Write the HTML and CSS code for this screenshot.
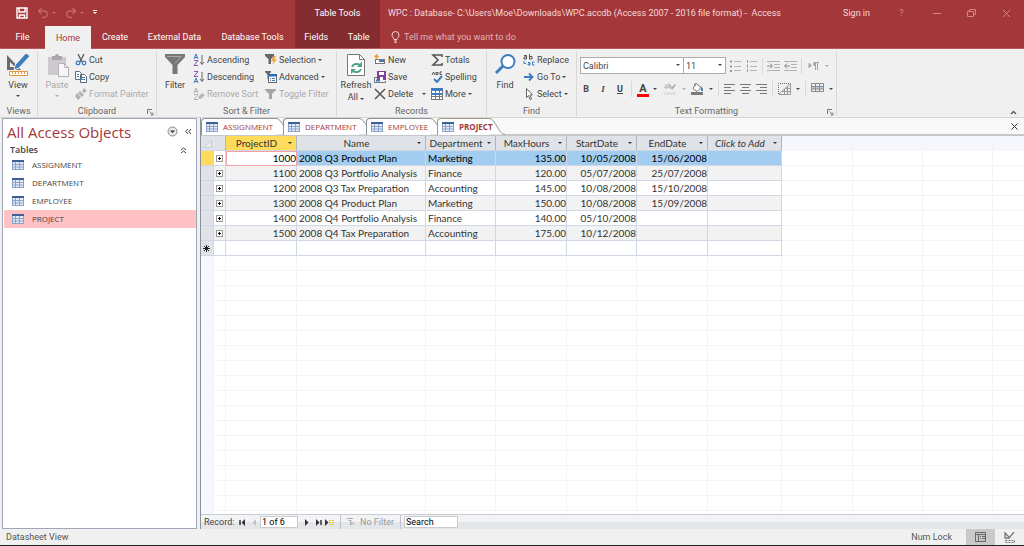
FILE: index.html
```
<!DOCTYPE html>
<html lang="en">

<head>
    <title>WPC : Database - Access</title>
    <meta charset="UTF-8" />
    <link rel="stylesheet" href="styles.css">
</head>

<body>
    <svg class="sprite" aria-hidden="true">
        <symbol id="i-table" viewBox="0 0 12 10">
            <rect x="0" y="0" width="12" height="10" fill="#e3ebf7" />
            <rect x="0" y="0" width="12" height="2" fill="#3f6096" />
            <path d="M0 4.500h12M0 7h12M0 9.500h12M3.500 2v8M7.500 2v8M11.500 2v8M.5 2v8" stroke="#8ba3cb" />
        </symbol>
        <symbol id="i-launch" viewBox="0 0 7 7">
            <path d="M.5 5V.5H5M2.500 2.500l3 3M6 3.500V6H3.500" fill="none" stroke="#777" />
        </symbol>
        <symbol id="i-plus" viewBox="0 0 7 7">
            <rect x=".5" y=".5" width="6" height="6" fill="#fff" stroke="#999" />
            <path d="M2 3.500h3M3.500 2v3" stroke="#000" />
        </symbol>
    </svg>

    <header class="titlebar">
        <div class="quick">
            <button aria-label="Save"><svg width="12" height="12" viewBox="0 0 12 12"><path d="M1 1h10v10H1zM3 1v4h6V1M3.500 11V8h5v3" fill="none" stroke="#fff" stroke-width="1.400" /></svg></button>
            <button aria-label="Undo"><svg width="12" height="12" viewBox="0 0 12 12"><path d="M4.500 1L1.500 4l3 3M2 4h5a3 3 0 0 1 0 6.500H5" fill="none" stroke="#c4686b" stroke-width="1.300" /></svg><i class="caret"></i></button>
            <button aria-label="Redo"><svg width="12" height="12" viewBox="0 0 12 12"><path d="M7.500 1l3 3-3 3M10 4H5a3 3 0 0 0 0 6.500h2" fill="none" stroke="#c4686b" stroke-width="1.300" /></svg><i class="caret"></i></button>
            <button class="customize" aria-label="Customize"><i class="caret"></i></button>
        </div>
        <div class="context">Table Tools</div>
        <h1>WPC : Database- C:\Users\Moe\Downloads\WPC.accdb (Access 2007 - 2016 file format) - &nbsp;Access</h1>
        <a class="signin" href="#">Sign in</a>
        <div class="window">
            <button aria-label="Help">?</button>
            <button aria-label="Minimize"><svg width="9" height="9"><path d="M1 4.500h8" stroke="#cf8789" /></svg></button>
            <button aria-label="Restore"><svg width="9" height="9"><path d="M.5 2.500h6v5h-6zM2.500 2.500v-2h6v5h-2" fill="none" stroke="#cf8789" /></svg></button>
            <button aria-label="Close"><svg width="9" height="9"><path d="M1 1l7 7M8 1l-7 7" stroke="#cf8789" /></svg></button>
        </div>
    </header>

    <nav class="tabs">
        <a class="file" href="#">File</a>
        <a class="home active" href="#">Home</a>
        <a class="create" href="#">Create</a>
        <a class="external" href="#">External Data</a>
        <a class="dbtools" href="#">Database Tools</a>
        <div class="context">
            <a href="#">Fields</a>
            <a href="#">Table</a>
        </div>
        <label class="tell">
            <svg width="9" height="12" viewBox="0 0 9 12"><path d="M3 8.500C3 7 1 6 1 4a3.500 3.500 0 0 1 7 0c0 2-2 3-2 4.500zM3 10h3M3.500 11.500h2" fill="none" stroke="#f3d5d6" /></svg>
            <input type="text" placeholder="Tell me what you want to do" />
        </label>
    </nav>

    <div class="ribbon">
        <section class="group views">
            <div class="tools">
                <button class="big"><svg width="24" height="24" viewBox="0 0 24 24"><path d="M1 2v15h14zM4 9l5 5H4z" fill="#6a6a6a" fill-rule="evenodd" /><path d="M20 0l4 3-11 12-5 2 1-5z" fill="#3f7cbf" stroke="#f0f0f0" /><path d="M3.500 18.500h18v4h-18zM6.500 19v2M9.500 19v2M12.500 19v2M15.500 19v2M18.500 19v2" fill="#fff" stroke="#e8953a" /></svg>View<i class="caret"></i></button>
            </div>
            <h2>Views</h2>
        </section>

        <section class="group clipboard">
            <div class="tools">
                <button class="big off"><svg width="24" height="24" viewBox="0 0 24 24"><path d="M3 4h18v18H3z" fill="#cdcacd" /><path d="M7 3h3a2 2 0 0 1 4 0h3v4H7z" fill="#a9a6a9" /><path d="M13.500 10.500h6l4 4v9h-10z" fill="#f8f4f8" stroke="#b5b0b5" /><path d="M19.500 10.500v4h4" fill="none" stroke="#b5b0b5" /></svg>Paste<i class="caret"></i></button>
                <div class="col">
                    <button><svg width="12" height="12" viewBox="0 0 12 12"><path d="M3 0l4 8M9 0L5 8" stroke="#666" stroke-width="1.500" /><circle cx="3" cy="9" r="1.800" fill="none" stroke="#3f7cbf" stroke-width="1.300" /><circle cx="9" cy="9" r="1.800" fill="none" stroke="#3f7cbf" stroke-width="1.300" /></svg>Cut</button>
                    <button><svg width="12" height="12" viewBox="0 0 12 12"><path d="M.5.5h4l2 2v6h-6zM5.500 3.500h4l2 2v6h-6z" fill="#fff" stroke="#5c6b7c" /><path d="M2 3.500h2M2 5.500h2M7 6.500h3M7 8.500h3" stroke="#3f7cbf" /></svg>Copy</button>
                    <button class="off"><svg width="12" height="12" viewBox="0 0 12 12"><path d="M9 0l3 3-3 2-2-2zM5 3l4 4-2 2-4-4zM2 5l4 4-3 3-3-4z" fill="#b1b1b1" /></svg>Format Painter</button>
                </div>
            </div>
            <h2>Clipboard</h2>
            <button class="launch" aria-label="Clipboard options"><svg width="7" height="7"><use href="#i-launch" /></svg></button>
        </section>

        <section class="group sort">
            <div class="tools">
                <button class="big"><svg width="24" height="24" viewBox="0 0 24 24"><path d="M2 1h20v3l-7.500 8v9h-5v-9L2 4z" fill="#777" /><path d="M4 3.500h14l-6 7" fill="none" stroke="#aaa" /></svg>Filter</button>
                <div class="col wide">
                    <button><svg width="12" height="12" viewBox="0 0 12 12"><path d="M1 5l2-5 2 5M1.500 3.500h3" fill="none" stroke="#3f7cbf" /><path d="M1 6.500h4L1 11.500h4" fill="none" stroke="#8a55b5" /><path d="M9 1v9M7 8l2 2.500L11 8" fill="none" stroke="#666" /></svg>Ascending</button>
                    <button><svg width="12" height="12" viewBox="0 0 12 12"><path d="M1 .5h4L1 5.500h4" fill="none" stroke="#8a55b5" /><path d="M1 12l2-5 2 5M1.500 10.500h3" fill="none" stroke="#3f7cbf" /><path d="M9 1v9M7 8l2 2.500L11 8" fill="none" stroke="#666" /></svg>Descending</button>
                    <button class="off"><svg width="12" height="12" viewBox="0 0 12 12"><path d="M1 5l2-5 2 5M1.500 3.500h3M1 6.500h4L1 11.500h4" fill="none" stroke="#b1b1b1" /><path d="M5 9l4-4 3 2-4 4H6z" fill="#b9b9b9" /></svg>Remove Sort</button>
                </div>
                <div class="col">
                    <button><svg width="12" height="12" viewBox="0 0 12 12"><path d="M0 0h9v2L6 5v5H3.500V5L0 2z" fill="#666" /><path d="M9 2L6 7h2.500L7 11l5-5.500H9.500L11 2z" fill="#f0a43a" /></svg>Selection<i class="caret"></i></button>
                    <button><svg width="12" height="12" viewBox="0 0 12 12"><path d="M0 0h6v1L4 3.500V8H2.500V3.500L0 1z" fill="#666" /><rect x="3.500" y="3.500" width="8" height="8" fill="#fff" stroke="#666" /><path d="M3 3h9v2.500H3z" fill="#2c6cb5" /><path d="M5 7.500h1M7 7.500h3M5 9.500h1M7 9.500h3" stroke="#3f7cbf" /></svg>Advanced<i class="caret"></i></button>
                    <button class="off"><svg width="12" height="12" viewBox="0 0 12 12"><path d="M0 1h11v1L7 6v5H4V6L0 2z" fill="#a5a5a5" /></svg>Toggle Filter</button>
                </div>
            </div>
            <h2>Sort &amp; Filter</h2>
        </section>

        <section class="group records">
            <div class="tools">
                <button class="big"><svg width="24" height="24" viewBox="0 0 24 24"><path d="M3.500 1.500h12l5 5v16h-17z" fill="#fff" stroke="#777" /><path d="M15.500 1.500v5h5" fill="none" stroke="#777" /><path d="M8 14a5 4.500 0 0 1 8-2M17 16a5 4.500 0 0 1-8 2" fill="none" stroke="#4fa383" stroke-width="2" /><path d="M18 8.500v5.500h-5zM7 21v-5h5z" fill="#4fa383" /></svg>Refresh<span>All <i class="caret"></i></span></button>
                <div class="col">
                    <button><svg width="12" height="12" viewBox="0 0 12 12"><path d="M2.500 0v5M0 2.500h5M1 1l3 3M4 1L1 4" stroke="#f0a43a" /><rect x="1.500" y="5.500" width="9" height="4" fill="#fff" stroke="#777" /><path d="M5 6h5v2H5z" fill="#3f7cbf" /></svg>New</button>
                    <button><svg width="12" height="12" viewBox="0 0 12 12"><path d="M3 0h9v9H3z" fill="#8040a0" /><path d="M5 1h5v3H5zM6 6h3v3H6z" fill="#fff" /><path d="M3 6.500H.5v5h11V10" fill="none" stroke="#777" /><path d="M2 8.500h4v2H2z" fill="#3f7cbf" /></svg>Save</button>
                    <button class="delete"><svg width="12" height="12" viewBox="0 0 12 12"><path d="M1 1l10 10M11 1L1 11" stroke="#555" stroke-width="1.500" /></svg><span>Delete</span><i class="caret"></i></button>
                </div>
                <div class="col">
                    <button><svg width="12" height="12" viewBox="0 0 12 12"><path d="M11 3V1H2l5 5-5 5h9V9" fill="none" stroke="#555" stroke-width="1.600" /></svg>Totals</button>
                    <button><svg width="12" height="12" viewBox="0 0 12 12"><path d="M1 4l1.500-3L4 4M5 1v2.500h2V1.500H5M11 1H9v2.500h2" fill="none" stroke="#555" /><path d="M3 8l3 3 5-6" fill="none" stroke="#3f7cbf" stroke-width="2" /></svg>Spelling</button>
                    <button><svg width="12" height="12" viewBox="0 0 12 12"><rect x=".5" y=".5" width="11" height="11" fill="#fff" stroke="#777" /><path d="M0 0h12v3H0zM1 5h10v2H1z" fill="#3f7cbf" /><path d="M0 8.500h12M4.500 3v9M8.500 3v9" stroke="#777" /></svg>More<i class="caret"></i></button>
                </div>
            </div>
            <h2>Records</h2>
        </section>

        <section class="group find">
            <div class="tools">
                <button class="big"><svg width="24" height="24" viewBox="0 0 24 24"><circle cx="15" cy="8.500" r="6.500" fill="#fff" stroke="#3f7cbf" stroke-width="2" /><path d="M10 13l-7 7" stroke="#3f7cbf" stroke-width="3" /></svg>Find</button>
                <div class="col">
                    <button><svg width="12" height="12" viewBox="0 0 12 12"><path d="M1 1.500h2.500V5H1V3h2M6.500 0v5H9V2.500H6.500" fill="none" stroke="#555" /><path d="M5 8.500h2V11H5V10h2M11.500 8H9.500v3h2" fill="none" stroke="#3f7cbf" /><path d="M1 7v2.500h2" fill="none" stroke="#3f7cbf" /></svg>Replace</button>
                    <button><svg width="12" height="12" viewBox="0 0 12 12"><path d="M1 6h8M6 2.500L9.500 6 6 9.500" fill="none" stroke="#3f7cbf" stroke-width="1.800" /></svg>Go To<i class="caret"></i></button>
                    <button><svg width="12" height="12" viewBox="0 0 12 12"><path d="M3.500.5v9l2-2 1.500 4 1.500-.5L7 7h2.500z" fill="#fff" stroke="#666" /></svg>Select<i class="caret"></i></button>
                </div>
            </div>
            <h2>Find</h2>
        </section>

        <section class="group text">
            <div class="tools format">
                <div class="row">
                    <div class="picks">
                        <div class="pick font"><select aria-label="Font"><option>Calibri</option></select><i class="caret"></i></div>
                        <div class="pick size"><select aria-label="Font size"><option>11</option></select><i class="caret"></i></div>
                    </div>
                    <button aria-label="Bullets"><svg width="12" height="12"><path d="M0 1.500h2M0 6.500h2M0 11h2" stroke="#999" stroke-width="2" /><path d="M4 1.500h7M4 6.500h7M4 10.500h7" stroke="#b5b5b5" /></svg></button>
                    <button aria-label="Numbering"><svg width="12" height="12"><path d="M1.500 0v3M1.500 4.500v3M1.500 9v3" stroke="#999" /><path d="M4 1.500h7M4 6.500h7M4 10.500h7" stroke="#b5b5b5" /></svg></button>
                    <b class="sep"></b>
                    <button aria-label="Indent"><svg width="13" height="12"><path d="M0 1.500h13M7 4.500h6M7 7.500h6M0 10.500h13" stroke="#b0b0b0" /><path d="M0 6h5M3 3.500L5.500 6 3 8.500" fill="none" stroke="#888" /></svg></button>
                    <button aria-label="Outdent"><svg width="13" height="12"><path d="M0 1.500h13M7 4.500h6M7 7.500h6M0 10.500h13" stroke="#b0b0b0" /><path d="M1 6h5M3 3.500L.5 6 3 8.500" fill="none" stroke="#888" /></svg></button>
                    <b class="sep"></b>
                    <button class="off direction" aria-label="Text direction"><svg width="12" height="12"><path d="M1 3v5M7.500 2v8M9.500 2v8M11 2.500H6" fill="none" stroke="#a5a5a5" /><path d="M7 2a2 2 0 0 0 0 4zM1 3l3 2.500L1 8z" fill="#a5a5a5" /></svg><i class="caret"></i></button>
                </div>
                <div class="row second">
                    <button class="letter bold">B</button>
                    <button class="letter italic">I</button>
                    <button class="letter under">U</button>
                    <b class="sep"></b>
                    <button class="letter color" aria-label="Font color">A<i class="caret"></i></button>
                    <button class="off" aria-label="Highlight"><svg width="13" height="12"><path d="M1 2h2v3H1V3.500M5 0v5h2V2.500H5" fill="none" stroke="#aaa" /><path d="M7 5l4-4 1 1-4 5z" fill="#aaa" /><path d="M0 9h12v3H0z" fill="#e6dde4" /></svg><i class="caret"></i></button>
                    <button aria-label="Fill"><svg width="13" height="12"><path d="M5 .5l5 4-4 4-4-3zM4 3V0" fill="#fff" stroke="#777" /><path d="M10 3l2 3v2h-2z" fill="#3f7cbf" /><path d="M0 9h12v3H0z" fill="#7a7a7a" /></svg><i class="caret"></i></button>
                    <b class="sep"></b>
                    <button aria-label="Align left"><svg width="11" height="10"><path d="M0 .5h11M0 3.500h7M0 6.500h11M0 9.500h7" stroke="#777" /></svg></button>
                    <button aria-label="Center"><svg width="11" height="10"><path d="M0 .5h11M2 3.500h7M0 6.500h11M2 9.500h7" stroke="#777" /></svg></button>
                    <button aria-label="Align right"><svg width="11" height="10"><path d="M0 .5h11M4 3.500h7M0 6.500h11M4 9.500h7" stroke="#777" /></svg></button>
                    <b class="sep"></b>
                    <button aria-label="Gridlines"><svg width="13" height="12"><path d="M.5 11V.5H11" fill="none" stroke="#666" stroke-dasharray="1 1" /><path d="M1 11.500h11.500V0M1 11L12 1M6.500 6v5M9.500 3v8M4 8.500h8M8 5.500h4" fill="none" stroke="#999" /></svg><i class="caret"></i></button>
                    <b class="sep"></b>
                    <button aria-label="Row colors"><svg width="13" height="12"><path d="M0 3h13v3H0z" fill="#b8d2ea" /><path d="M.5.500h12v8H.5zM0 3.500h13M0 6h13M4.500 0v8M8.500 0v8" fill="none" stroke="#8a8a8a" /></svg><i class="caret"></i></button>
                </div>
            </div>
            <h2>Text Formatting</h2>
            <button class="launch" aria-label="Text options"><svg width="7" height="7"><use href="#i-launch" /></svg></button>
        </section>
        <button class="collapse" aria-label="Collapse ribbon"><svg width="7" height="5"><path d="M1 4l2.500-2.500L6 4" fill="none" stroke="#555" stroke-width="1.300" /></svg></button>
    </div>

    <main>
        <aside>
            <div class="pane-head">
                <h2>All Access Objects</h2>
                <button aria-label="Filter objects"><svg width="11" height="11"><circle cx="5.500" cy="5.500" r="4.500" fill="#e6e8ec" stroke="#888" /><path d="M3 4.500h5L5.500 7z" fill="#333" /></svg></button>
                <button aria-label="Close pane"><svg width="7" height="7"><path d="M3 1L.8 3.500 3 6M6 1L3.800 3.500 6 6" fill="none" stroke="#444" /></svg></button>
            </div>
            <div class="pane-group">
                <h3>Tables</h3>
                <button aria-label="Collapse tables"><svg width="7" height="7"><path d="M1 3l2.500-2L6 3M1 6l2.500-2L6 6" fill="none" stroke="#444" /></svg></button>
            </div>
            <ul>
                <li><a href="#"><svg width="12" height="10"><use href="#i-table" /></svg>ASSIGNMENT</a></li>
                <li><a href="#"><svg width="12" height="10"><use href="#i-table" /></svg>DEPARTMENT</a></li>
                <li><a href="#"><svg width="12" height="10"><use href="#i-table" /></svg>EMPLOYEE</a></li>
                <li class="selected"><a href="#"><svg width="12" height="10"><use href="#i-table" /></svg>PROJECT</a></li>
            </ul>
        </aside>

        <div class="document">
            <div class="doc-tabs">
                <a class="assignment" href="#"><svg width="12" height="10"><use href="#i-table" /></svg>ASSIGNMENT<svg class="edge" width="16" height="17"><path d="M0 .5C7 .5 9 16.500 16 16.500H0z" /><path class="line" d="M0 .5C7 .5 9 16.500 16 16.500" /></svg></a>
                <a class="department" href="#"><svg width="12" height="10"><use href="#i-table" /></svg>DEPARTMENT<svg class="edge" width="16" height="17"><path d="M0 .5C7 .5 9 16.500 16 16.500H0z" /><path class="line" d="M0 .5C7 .5 9 16.500 16 16.500" /></svg></a>
                <a class="employee" href="#"><svg width="12" height="10"><use href="#i-table" /></svg>EMPLOYEE<svg class="edge" width="16" height="17"><path d="M0 .5C7 .5 9 16.500 16 16.500H0z" /><path class="line" d="M0 .5C7 .5 9 16.500 16 16.500" /></svg></a>
                <a class="project active" href="#"><svg width="12" height="10"><use href="#i-table" /></svg><span>PROJECT</span><svg class="edge" width="16" height="17"><path d="M0 .5C7 .5 9 16.500 16 16.500H0z" /><path class="line" d="M0 .5C7 .5 9 16.500 16 16.500" /></svg></a>
                <button aria-label="Close"><svg width="7" height="7"><path d="M.5.500l6 6M6.500.500l-6 6" stroke="#333" /></svg></button>
            </div>

            <div class="sheet">
                <div class="lines">
                    <i class="c-select"></i><i class="c-expand"></i><i class="c-id"></i><i class="c-name"></i><i class="c-dept"></i><i class="c-hours"></i><i class="c-date"></i><i class="c-end"></i><i class="c-add"></i><i class="c-hours"></i><i class="c-date"></i><i class="c-date"></i>
                </div>
                <table>
                    <colgroup>
                        <col class="c-select"><col class="c-expand"><col class="c-id"><col class="c-name"><col class="c-dept"><col class="c-hours"><col class="c-date"><col class="c-end"><col class="c-add">
                    </colgroup>
                    <thead>
                        <tr>
                            <th class="corner" colspan="2"><svg width="9" height="9"><path d="M8.500 1v7.500H1z" fill="#e9ecf1" stroke="#c5cad2" /></svg></th>
                            <th class="current"><div>ProjectID<i class="caret"></i></div></th>
                            <th><div>Name<i class="caret"></i></div></th>
                            <th><div>Department<i class="caret"></i></div></th>
                            <th><div>MaxHours<i class="caret"></i></div></th>
                            <th><div>StartDate<i class="caret"></i></div></th>
                            <th><div>EndDate<i class="caret"></i></div></th>
                            <th class="add"><div>Click to Add<i class="caret"></i></div></th>
                        </tr>
                    </thead>
                    <tbody>
                        <tr class="current">
                            <td></td><td><svg width="7" height="7"><use href="#i-plus" /></svg></td>
                            <td class="num">1000</td><td>2008 Q3 Product Plan</td><td>Marketing</td><td class="num">135.00</td><td class="num">10/05/2008</td><td class="num">15/06/2008</td><td></td>
                        </tr>
                        <tr>
                            <td></td><td><svg width="7" height="7"><use href="#i-plus" /></svg></td>
                            <td class="num">1100</td><td>2008 Q3 Portfolio Analysis</td><td>Finance</td><td class="num">120.00</td><td class="num">05/07/2008</td><td class="num">25/07/2008</td><td></td>
                        </tr>
                        <tr>
                            <td></td><td><svg width="7" height="7"><use href="#i-plus" /></svg></td>
                            <td class="num">1200</td><td>2008 Q3 Tax Preparation</td><td>Accounting</td><td class="num">145.00</td><td class="num">10/08/2008</td><td class="num">15/10/2008</td><td></td>
                        </tr>
                        <tr>
                            <td></td><td><svg width="7" height="7"><use href="#i-plus" /></svg></td>
                            <td class="num">1300</td><td>2008 Q4 Product Plan</td><td>Marketing</td><td class="num">150.00</td><td class="num">10/08/2008</td><td class="num">15/09/2008</td><td></td>
                        </tr>
                        <tr>
                            <td></td><td><svg width="7" height="7"><use href="#i-plus" /></svg></td>
                            <td class="num">1400</td><td>2008 Q4 Portfolio Analysis</td><td>Finance</td><td class="num">140.00</td><td class="num">05/10/2008</td><td></td><td></td>
                        </tr>
                        <tr>
                            <td></td><td><svg width="7" height="7"><use href="#i-plus" /></svg></td>
                            <td class="num">1500</td><td>2008 Q4 Tax Preparation</td><td>Accounting</td><td class="num">175.00</td><td class="num">10/12/2008</td><td></td><td></td>
                        </tr>
                        <tr class="new">
                            <td><svg width="7" height="7"><path d="M3.500 0v7M0 3.500h7M1 1l5 5M6 1L1 6" stroke="#222" /></svg></td><td></td><td></td><td></td><td></td><td></td><td></td><td></td><td></td>
                        </tr>
                    </tbody>
                </table>
            </div>

            <div class="recordbar">
                <label for="record">Record:</label>
                <button aria-label="First record"><svg width="7" height="7"><path d="M1 1v5" stroke="#333" stroke-width="1.500" /><path d="M6 0v7L2.500 3.500z" fill="#333" /></svg></button>
                <button aria-label="Previous record"><svg width="7" height="7"><path d="M5 0v7L1.500 3.500z" fill="#c2c2c2" /></svg></button>
                <input type="text" id="record" value="1 of 6" />
                <button class="next" aria-label="Next record"><svg width="7" height="7"><path d="M2 0v7l3.500-3.500z" fill="#333" /></svg></button>
                <button aria-label="Last record"><svg width="7" height="7"><path d="M6 1v5" stroke="#333" stroke-width="1.500" /><path d="M1 0v7l3.500-3.500z" fill="#333" /></svg></button>
                <button aria-label="New record"><svg width="10" height="7"><path d="M0 0v7l3.500-3.500z" fill="#333" /><path d="M4 1.500h6M4 3.500h6M4 5.500h6" stroke="#e9c33a" stroke-dasharray="2 1" /></svg></button>
                <button class="nofilter"><svg width="8" height="8"><path d="M0 .5h6M1.500 2.500h3M3.500 3v4M4 4l3 3M7 4L4 7" fill="none" stroke="#aaa" /></svg>No Filter</button>
                <input type="text" class="search" aria-label="Search" value="Search" />
            </div>
        </div>
    </main>

    <footer>
        <span>Datasheet View</span>
        <span class="numlock">Num Lock</span>
        <button class="on" aria-label="Datasheet View"><svg width="11" height="10"><path d="M.5.500h10v9H.5zM0 2.500h11M3.500 2v8M5 4.500h1M7 4.500h3M5 6.500h1M7 6.500h3" fill="none" stroke="#666" /></svg></button>
        <button aria-label="Design View"><svg width="12" height="11"><path d="M1 0v6h5M1 1l4 4M4 6l2-1 4-5" fill="none" stroke="#777" stroke-width="1.300" /><path d="M1.500 8.500h9v2h-9z" fill="none" stroke="#777" stroke-dasharray="2 1" /></svg></button>
    </footer>
</body>

</html>
```
FILE: styles.css
```
* {
    box-sizing: border-box;
}

body {
    margin: 0;
    min-height: 100vh;
    display: flex;
    flex-direction: column;
    font-family: Roboto, "Segoe UI", sans-serif;
    font-size: 9px;
    line-height: 12px;
    color: #444;
    background-color: #f0f0f0;
}

h1,
h2,
h3,
ul {
    margin: 0;
    padding: 0;
    font-weight: normal;
    font-size: 9px;
    list-style: none;
}

a {
    color: inherit;
    text-decoration: none;
}

button,
input,
select {
    margin: 0;
    padding: 0;
    border: none;
    outline: none;
    background: none;
    font: inherit;
    color: inherit;
}

button {
    display: flex;
    align-items: center;
    justify-content: center;
    white-space: nowrap;
}

svg {
    flex: none;
    display: block;
}

.sprite {
    position: absolute;
    width: 0;
    height: 0;
}

.caret {
    flex: none;
    display: inline-block;
    width: 4px;
    border: 2px solid transparent;
    border-top-color: currentColor;
    border-bottom: none;
}

/* title bar */
.titlebar {
    display: flex;
    height: 26px;
    align-items: center;
    background-color: #a4373a;
    color: #f5d9da;
}

.quick {
    display: flex;
    gap: 9px;
    width: 295px;
    padding-left: 16px;
}

.quick button {
    gap: 3px;
    color: #c4686b;
}

.quick .customize {
    color: #fff;
}

.customize .caret {
    position: relative;
}

.customize .caret::before {
    content: "";
    position: absolute;
    left: -2px;
    top: -4px;
    width: 4px;
    height: 1px;
    background-color: #fff;
}

.context {
    width: 85px;
    height: 100%;
    display: flex;
    align-items: center;
    justify-content: center;
    background-color: #842c2f;
    color: #fff;
}

.titlebar h1 {
    flex: 1;
    margin-left: 8px;
    white-space: nowrap;
}

.window {
    display: flex;
    margin-left: 14px;
}

.window button {
    width: 35px;
    color: #cf8789;
}

/* ribbon tabs */
.tabs {
    display: flex;
    height: 23px;
    background-color: #a4373a;
    color: #fff;
    border-bottom: 1px solid #b85a5d;
    white-space: nowrap;
}

.tabs a {
    display: flex;
    align-items: center;
    justify-content: center;
}

.tabs .file {
    width: 45px;
}

.tabs .home {
    width: 46px;
}

.tabs .create {
    width: 48px;
}

.tabs .external {
    width: 71px;
}

.tabs .dbtools {
    width: 85px;
}

.tabs .active {
    height: 23px;
    background-color: #f0f0f0;
    color: #a4373a;
}

.tabs .context a {
    flex: 1;
}

.tell {
    display: flex;
    align-items: center;
    gap: 4px;
    margin-left: 11px;
}

.tell input {
    width: 160px;
}

.tell input::placeholder {
    color: #e3b0b2;
    opacity: 1;
}

/* ribbon */
.ribbon {
    display: flex;
    height: 69px;
    border-bottom: 1px solid #d5d5d5;
    padding-top: 2px;
}

.group {
    position: relative;
    height: 65px;
    border-right: 1px solid #d8d8d8;
    display: flex;
    flex-direction: column;
}

.group h2 {
    text-align: center;
    color: #666;
    line-height: 10px;
}

.tools {
    display: flex;
    height: 56px;
}

.views {
    width: 38px;
}

.clipboard {
    width: 119px;
}

.sort {
    width: 180px;
}

.records {
    width: 150px;
}

.clipboard .tools,
.records .tools {
    padding-left: 1px;
}

.find {
    width: 90px;
}

.text {
    width: 260px;
}

.big {
    width: 36px;
    flex: none;
    flex-direction: column;
    justify-content: flex-start;
    padding-top: 2px;
}

.big svg {
    margin-bottom: 2px;
}

.big > .caret {
    margin-top: 4px;
}

.col {
    display: flex;
    flex-direction: column;
    margin-right: 5px;
}

.col.wide {
    width: 67px;
}

.col button {
    height: 17px;
    gap: 2px;
    justify-content: flex-start;
}

.delete span {
    width: 32px;
    text-align: left;
}

.off {
    color: #aaa;
}

.launch {
    position: absolute;
    right: 2px;
    bottom: 0;
}

.format {
    flex-direction: column;
    padding-left: 3px;
}

.row {
    display: flex;
    align-items: center;
    gap: 4px;
    height: 17px;
    margin-top: 6px;
}

.second {
    gap: 5px;
}

.row button {
    gap: 5px;
}

.row .direction {
    margin-left: 2px;
}

.sep {
    width: 1px;
    height: 16px;
    background-color: #d8d8d8;
}

.picks {
    display: flex;
}

.pick {
    position: relative;
    height: 17px;
    border: 1px solid #ababab;
    background-color: #fff;
}

.pick select {
    appearance: none;
    width: 100%;
    height: 15px;
    padding-left: 2px;
    display: block;
}

.pick .caret {
    position: absolute;
    right: 3px;
    top: 6px;
}

.font {
    width: 104px;
}

.size {
    width: 42px;
    border-left: none;
}

.letter {
    width: 12px;
    font-weight: bold;
}

.italic {
    font-family: "Liberation Serif", serif;
    font-style: italic;
}

.under {
    text-decoration: underline;
}

.row .color {
    width: 22px;
    position: relative;
    gap: 6px;
    font-size: 11px;
}

.color::before {
    content: "";
    position: absolute;
    left: 0;
    bottom: -2px;
    width: 12px;
    height: 3px;
    background-color: #f00;
}

.collapse {
    margin: auto 7px 2px auto;
}

/* workspace */
main {
    flex: 1;
    display: flex;
    gap: 3px;
    padding-left: 2px;
}

aside {
    width: 195px;
    flex: none;
    border: 1px solid #a0a8b8;
    background-color: #fff;
}

.pane-head,
.pane-group {
    display: flex;
    align-items: center;
    gap: 7px;
    padding: 0 4px;
}

.pane-head {
    height: 25px;
}

.pane-head h2 {
    flex: 1;
    font-family: "Open Sans", sans-serif;
    font-size: 15px;
    color: #a4373a;
}

.pane-group {
    height: 12px;
    padding: 0 9px 0 7px;
}

.pane-group h3 {
    flex: 1;
    font-family: "Open Sans", sans-serif;
    font-weight: 600;
}

aside li a {
    display: flex;
    align-items: center;
    gap: 8px;
    height: 18px;
    padding-left: 8px;
    margin-left: 1px;
    font-family: "Open Sans", sans-serif;
    font-size: 8px;
}

.selected a {
    background-color: #ffc1c3;
}

.document {
    flex: 1;
    display: flex;
    flex-direction: column;
    border-left: 1px solid #8a929c;
    background-color: #fff;
}

.doc-tabs {
    display: flex;
    height: 18px;
    border-bottom: 2px solid #c4c7ca;
    background-color: #f8f8f8;
    color: #a4373a;
    font-family: "Open Sans", sans-serif;
    font-size: 8px;
}

.doc-tabs a {
    position: relative;
    display: flex;
    align-items: center;
    gap: 5px;
    height: 17px;
    padding-left: 4px;
    border: 1px solid #8c9299;
    border-width: 1px 0 0 1px;
    border-radius: 4px 0 0 0;
    background-color: #fff;
}

.assignment {
    width: 75px;
}

.department,
.employee,
.project {
    margin-left: 7px;
}

.department {
    width: 76px;
}

.employee {
    width: 64px;
}

.project {
    width: 52px;
}

.doc-tabs .active {
    font-weight: bold;
    border-color: #a89a80;
}

.doc-tabs span {
    position: relative;
    z-index: 1;
}

.edge {
    position: absolute;
    left: 100%;
    top: -1px;
    fill: #fff;
}

.edge .line {
    fill: none;
    stroke: #8c9299;
}

.doc-tabs button {
    margin: 0 6px 0 auto;
}

/* datasheet */
.sheet {
    flex: 1;
    position: relative;
    font-family: Lato, Calibri, sans-serif;
    font-size: 10px;
    color: #333;
    background: linear-gradient(#f6f6fd, #f6f6fd) 0 0 / 100% 15px no-repeat, repeating-linear-gradient(#fff 0 14px, #f3f4f9 14px 15px);
}

.lines {
    position: absolute;
    inset: 0;
    display: flex;
    overflow: hidden;
}

.lines i {
    flex: none;
    border-right: 1px solid #f3f4f9;
}

.lines .c-select {
    background-color: #f6f6fd;
}

.c-select {
    width: 13px;
}

.c-expand {
    width: 12px;
}

.c-id {
    width: 71px;
}

.c-name {
    width: 129px;
}

.c-dept {
    width: 70px;
}

.c-hours {
    width: 71px;
}

.c-date {
    width: 70px;
}

.c-end {
    width: 71px;
}

.c-add {
    width: 74px;
}

table {
    position: relative;
    width: 581px;
    table-layout: fixed;
    border-collapse: separate;
    border-spacing: 0;
    line-height: 14px;
    background-color: #fff;
}

th,
td {
    height: 15px;
    padding: 0 2px;
    border-right: 1px solid #d0d7e5;
    border-bottom: 1px solid #d0d7e5;
    white-space: nowrap;
    overflow: hidden;
}

th {
    font-weight: normal;
    background-color: #dfe3e8;
    border-right-color: #b0b6be;
}

th div {
    position: relative;
    padding-right: 9px;
}

th .caret {
    position: absolute;
    right: 2px;
    top: 6px;
}

th.current {
    background-color: #ffdb5c;
}

th.add {
    font-style: italic;
}

tbody tr:nth-child(even) td {
    background-color: #f2f2f2;
}

tbody .current td {
    background-color: #a3cdf0;
    color: #000;
}

tbody .current td:nth-child(2) {
    background-color: #fff;
}

tbody .current .num:nth-child(3) {
    background-color: #fff;
    border: 1px solid #f4a0a4;
    line-height: 13px;
}

tbody tr td:first-child,
tbody tr:nth-child(even) td:first-child {
    background-color: #dfe3e8;
}

tbody .current td:first-child {
    background-color: #ffdb5c;
}

.num {
    text-align: right;
    padding-right: 0;
}

/* record navigation */
.recordbar {
    display: flex;
    align-items: center;
    height: 15px;
    border-top: 1px solid #c8ccd0;
    background: linear-gradient(#f2f3f5 50%, #e4e6e9 50%);
}

.recordbar label {
    padding-left: 3px;
    width: 35px;
}

.recordbar button {
    width: 12px;
}

.recordbar input {
    width: 38px;
    height: 12px;
    padding: 0 1px;
    border: 1px solid #c8ccd0;
    background-color: #fff;
    color: #000;
}

.recordbar .next {
    margin-left: 2px;
}

.recordbar .search {
    width: 54px;
    margin-left: 3px;
}

.recordbar .nofilter {
    width: 61px;
    height: 14px;
    gap: 5px;
    margin-left: 4px;
    border: 1px solid #c0c4c8;
    border-width: 0 1px;
    color: #999;
}

/* status bar */
footer {
    display: flex;
    align-items: center;
    height: 17px;
    padding-left: 6px;
    border-bottom: 1px solid #222;
    color: #555;
}

.numlock {
    margin: 0 14px 0 auto;
}

footer button {
    width: 29px;
    height: 16px;
}

footer .on {
    background-color: #c9c9c9;
}
```
